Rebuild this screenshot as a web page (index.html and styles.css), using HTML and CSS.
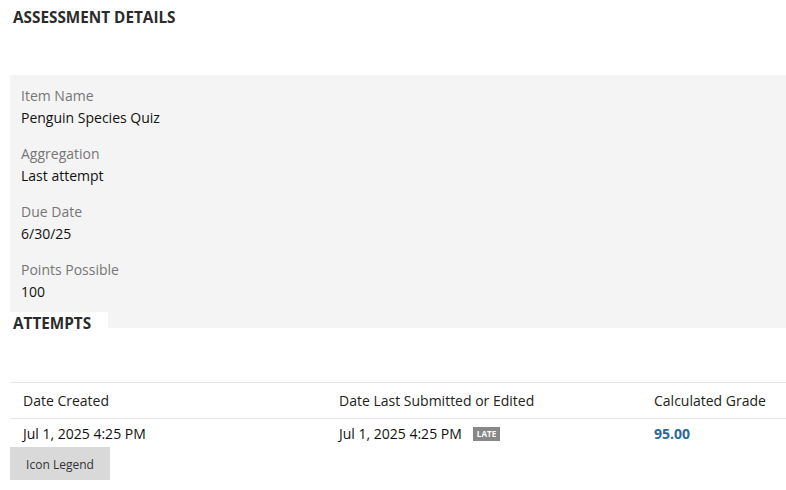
FILE: index.html
```html
<!DOCTYPE html>
<html lang="en">
<head>
<meta charset="utf-8">
<title>Assessment Details</title>
<link rel="stylesheet" href="styles.css">
</head>
<body>
<main class="page">
  <h2 class="section-title">ASSESSMENT DETAILS</h2>
  <section class="details">
    <div class="field">
      <div class="field-label">Item Name</div>
      <div class="field-value">Penguin Species Quiz</div>
    </div>
    <div class="field">
      <div class="field-label">Aggregation</div>
      <div class="field-value">Last attempt</div>
    </div>
    <div class="field">
      <div class="field-label">Due Date</div>
      <div class="field-value">6/30/25</div>
    </div>
    <div class="field">
      <div class="field-label">Points Possible</div>
      <div class="field-value">100</div>
    </div>
  </section>
  <h2 class="section-title attempts-title">ATTEMPTS</h2>
  <div class="attempts">
    <div class="row head">
      <div class="cell">Date Created</div>
      <div class="cell">Date Last Submitted or Edited</div>
      <div class="cell">Calculated Grade</div>
    </div>
    <div class="row body">
      <div class="cell">Jul 1, 2025 4:25 PM</div>
      <div class="cell">Jul 1, 2025 4:25 PM <span class="badge">LATE</span></div>
      <div class="cell grade">95.00</div>
    </div>
  </div>
  <button class="legend-btn" type="button">Icon Legend</button>
</main>
</body>
</html>
```
FILE: styles.css
```css
* { box-sizing: border-box; }
html, body { margin: 0; padding: 0; background: #fff; }
body {
  font-family: "Open Sans", "Liberation Sans", sans-serif;
  font-size: 14px;
  color: #111;
}
.page {
  padding: 6px 0 0 10px;
}
.section-title {
  margin: 0;
  padding: 0 3px;
  font-size: 15.3px;
  line-height: 22px;
  font-weight: 700;
  color: #2b2b2b;
}
.details {
  margin-top: 47px;
  background: #f4f4f4;
  padding: 10px 11px 25px;
  display: flex;
  flex-direction: column;
  gap: 14px;
}
.field-label {
  line-height: 22px;
  color: #767676;
}
.field-value {
  line-height: 22px;
  color: #111;
}
.attempts-title {
  width: 98px;
  margin-top: -16px;
  background: #fff;
}
.attempts {
  margin-top: 48px;
}
.row {
  display: grid;
  grid-template-columns: 316px 315px 1fr;
  align-items: center;
}
.row.head {
  border-top: 1px solid #e6e6e6;
  border-bottom: 1px solid #e6e6e6;
  height: 37px;
  color: #222;
}
.row.body {
  height: 28px;
  padding-top: 2px;
  color: #111;
}
.cell {
  padding-left: 13px;
  line-height: 20px;
  white-space: nowrap;
  display: flex;
  align-items: center;
}
.badge {
  display: inline-block;
  margin-left: 11px;
  background: #888;
  color: #fff;
  font-size: 8px;
  font-weight: 700;
  line-height: 14px;
  height: 14px;
  padding: 0 4px;
  letter-spacing: 0.1px;
}
.grade {
  font-weight: 700;
  color: #2a6a9b;
}
.legend-btn {
  display: block;
  width: 100px;
  height: 33px;
  border: none;
  background: #d9d9d9;
  color: #333;
  font-family: "Open Sans", "Liberation Sans", sans-serif;
  font-size: 12px;
  padding: 1px 0 0;
  cursor: pointer;
}
```
